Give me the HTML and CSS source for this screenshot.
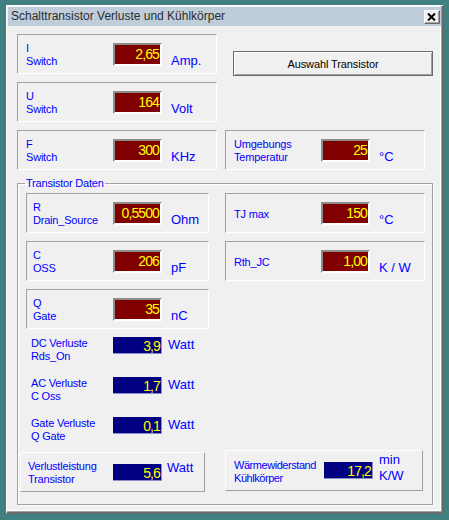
FILE: index.html
```html
<!DOCTYPE html>
<html lang="de">
<head>
<meta charset="utf-8">
<title>Schalttransistor Verluste und Kühlkörper</title>
<link rel="stylesheet" href="styles.css">
</head>
<body>
<div class="window">
  <div class="titlebar">
    <span class="title">Schalttransistor Verluste und Kühlkörper</span>
    <span class="close"><svg width="9" height="8" viewBox="0 0 9 8"><path d="M1 0.5 L8 7.5 M8 0.5 L1 7.5" stroke="#000" stroke-width="2"/></svg></span>
  </div>
  <div class="client">
    <div class="top-grid">
      <div class="panel p-i">
        <div class="label">I<br>Switch</div>
        <div class="val red">2,65</div>
        <div class="unit">Amp.</div>
      </div>
      <button class="btn">Auswahl Transistor</button>
      <div class="panel p-u">
        <div class="label">U<br>Switch</div>
        <div class="val red">164</div>
        <div class="unit">Volt</div>
      </div>
      <div class="panel p-f">
        <div class="label">F<br>Switch</div>
        <div class="val red">300</div>
        <div class="unit">KHz</div>
      </div>
      <div class="panel p-t">
        <div class="label">Umgebungs<br>Temperatur</div>
        <div class="val red">25</div>
        <div class="unit">°C</div>
      </div>
    </div>

    <fieldset class="group">
      <legend class="legend">Transistor Daten</legend>
      <div class="group-body">
        <div class="col-left">
          <div class="panel narrow">
            <div class="label">R<br>Drain_Source</div>
            <div class="val red">0,5500</div>
            <div class="unit">Ohm</div>
          </div>
          <div class="panel narrow">
            <div class="label">C<br>OSS</div>
            <div class="val red">206</div>
            <div class="unit">pF</div>
          </div>
          <div class="panel narrow">
            <div class="label">Q<br>Gate</div>
            <div class="val red">35</div>
            <div class="unit">nC</div>
          </div>
          <div class="loss first">
            <div class="label">DC Verluste<br>Rds_On</div>
            <div class="val blue">3,9</div>
            <div class="unit">Watt</div>
          </div>
          <div class="loss">
            <div class="label">AC Verluste<br>C Oss</div>
            <div class="val blue">1,7</div>
            <div class="unit">Watt</div>
          </div>
          <div class="loss">
            <div class="label">Gate Verluste<br>Q Gate</div>
            <div class="val blue">0,1</div>
            <div class="unit">Watt</div>
          </div>
          <div class="panel raised p-total">
            <div class="label">Verlustleistung<br>Transistor</div>
            <div class="val blue">5,6</div>
            <div class="unit">Watt</div>
          </div>
        </div>
        <div class="col-right">
          <div class="panel">
            <div class="label">TJ max</div>
            <div class="val red">150</div>
            <div class="unit">°C</div>
          </div>
          <div class="panel">
            <div class="label">Rth_JC</div>
            <div class="val red">1,00</div>
            <div class="unit">K / W</div>
          </div>
          <div class="panel raised p-heat">
            <div class="label">Wärmewiderstand<br>Kühlkörper</div>
            <div class="val blue">17,2</div>
            <div class="unit">min<br>K/W</div>
          </div>
        </div>
      </div>
    </fieldset>
  </div>
</div>
</body>
</html>
```

FILE: styles.css
```css
html, body {
  margin: 0;
  padding: 0;
}
body {
  background: #408080;
  width: 449px;
  height: 520px;
  overflow: hidden;
  font-family: "Liberation Sans", Arial, sans-serif;
}
.window {
  margin: 5px 0 0 6px;
  width: 438px;
  height: 509px;
  box-sizing: border-box;
  background: #f0f0f0;
  border-style: solid;
  border-width: 1px 2px 2px 1px;
  border-color: #ffffff #696969 #696969 #ffffff;
  padding: 1px;
  box-shadow: inset -1px -1px 0 #a0a0a0, inset -2px -2px 0 #ffffff;
  display: flex;
  flex-direction: column;
}
.titlebar {
  height: 19px;
  background: #bfcddb;
  display: flex;
  align-items: center;
  justify-content: space-between;
  padding: 0 1px 0 3px;
}
.title {
  font-size: 12px;
  color: #2b2b2b;
  line-height: 19px;
}
.close {
  width: 16px;
  height: 14px;
  box-sizing: border-box;
  background: #f0f0f0;
  border-style: solid;
  border-width: 1px;
  border-color: #ffffff #696969 #696969 #ffffff;
  box-shadow: inset -1px -1px 0 #a0a0a0;
  display: flex;
  align-items: center;
  justify-content: center;
  margin-top: 1px;
}
.close svg {
  display: block;
  margin: 0 1px 1px 0;
}
.client {
  flex: 1;
  padding: 8px 0 0 9px;
}
.top-grid {
  display: grid;
  grid-template-columns: 200px 200px;
  grid-template-rows: 40px 40px 40px;
  column-gap: 8px;
  row-gap: 8px;
}
.p-i { grid-column: 1; grid-row: 1; }
.p-u { grid-column: 1; grid-row: 2; }
.p-f { grid-column: 1; grid-row: 3; }
.p-t { grid-column: 2; grid-row: 3; }
.btn {
  grid-column: 2;
  grid-row: 1 / 3;
  align-self: start;
  justify-self: start;
  margin: 17px 0 0 8px;
  width: 200px;
  height: 25px;
  box-sizing: border-box;
  padding: 0;
  background: #f0f0f0;
  border: 1px solid #6a6a6a;
  box-shadow: inset 1px 1px 0 #ffffff, inset -1px -1px 0 #a0a0a0;
  font-family: "Liberation Sans", Arial, sans-serif;
  font-size: 11px;
  color: #000;
  letter-spacing: -0.1px;
}

.panel {
  box-sizing: border-box;
  height: 40px;
  width: 200px;
  border: 1px solid;
  border-color: #a0a0a0 #ffffff #ffffff #a0a0a0;
  padding-left: 8px;
  display: grid;
  grid-template-columns: 87px 49px auto;
  align-items: center;
}
.panel.narrow {
  width: 183px;
  padding-left: 6px;
  grid-template-columns: 80px 49px auto;
}
.panel.raised {
  border-color: #ffffff #a0a0a0 #a0a0a0 #ffffff;
}
.label {
  font-size: 11px;
  line-height: 13px;
  color: #0000ff;
  letter-spacing: -0.2px;
  white-space: nowrap;
  margin-top: 2px;
}
.val {
  box-sizing: border-box;
  width: 49px;
  color: #ffff00;
  text-align: right;
  font-size: 14px;
  letter-spacing: -0.9px;
  white-space: nowrap;
}
.val.red {
  height: 23px;
  line-height: 19px;
  background: #800000;
  border: 2px solid;
  border-color: #8c8c8c #ffffff #ffffff #8c8c8c;
  padding-right: 1px;
}
.val.blue {
  height: 17px;
  line-height: 19px;
  background: #000080;
  border-right: 1px solid #8c8cc8;
  border-bottom: 1px solid #8c8cc8;
  padding-right: 1px;
}
.unit {
  align-self: start;
  margin-top: 18px;
  margin-left: 9px;
  font-size: 13px;
  line-height: 16px;
  color: #0000ff;
  white-space: nowrap;
}

.group {
  margin: 7px 0 0 0;
  width: 416px;
  min-width: 0;
  box-sizing: border-box;
  border: 1px solid #a0a0a0;
  box-shadow: 1px 1px 0 #ffffff, inset 1px 1px 0 #ffffff;
  padding: 3px 0 12px 8px;
}
.legend {
  font-size: 11px;
  line-height: 13px;
  color: #0000ff;
  padding: 0 1px;
  margin-left: -1px;
  letter-spacing: -0.2px;
}
.group-body {
  display: flex;
  column-gap: 16px;
}
.col-left {
  width: 183px;
  display: flex;
  flex-direction: column;
  row-gap: 8px;
}
.col-right {
  width: 200px;
  display: flex;
  flex-direction: column;
  row-gap: 8px;
}
.loss {
  height: 26px;
  padding-left: 5px;
  display: grid;
  grid-template-columns: 82px 49px auto;
  align-items: start;
  margin-top: 6px;
}
.loss.first {
  margin-top: 0;
}
.loss .label {
  margin-top: 0;
}
.loss .unit {
  margin-top: 0;
  margin-left: 6px;
}
.p-total {
  width: 185px;
  margin-left: -6px;
  margin-top: 1px;
  padding-left: 7px;
  grid-template-columns: 85px 49px auto;
}
.p-total .unit {
  margin-top: 7px;
  margin-left: 5px;
}
.p-heat {
  width: 198px;
  height: 41px;
  margin-top: auto;
  margin-bottom: 1px;
  grid-template-columns: 90px 49px auto;
}
.p-heat .label {
  letter-spacing: -0.45px;
}
.p-heat .unit {
  margin-top: 1px;
  margin-left: 6px;
}
```
